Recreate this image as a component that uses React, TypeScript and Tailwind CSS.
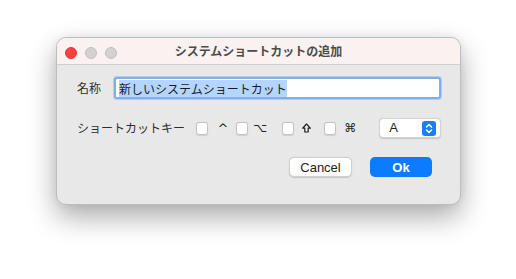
import React from "react";

const jp = "font-['Noto_Sans_CJK_JP','Noto_Sans',sans-serif]";

const Check = ({ className = "" }: { className?: string }) => (
  <span
    className={`block w-[12px] h-[13px] rounded-[3px] bg-white border border-[#c4c4c4] shadow-[0_0.5px_1px_rgba(0,0,0,0.12)] ${className}`}
  />
);

const App = () => {
  return (
    <div className="w-[516px] h-[279px] bg-white pt-[37px] pl-[56px] overflow-hidden">
      <div className="w-[405px] h-[168px] rounded-[10px] border border-[#bdbdbd] bg-[#e8e8e8] shadow-[0_12px_28px_rgba(0,0,0,0.33),0_0_10px_rgba(0,0,0,0.06)] overflow-hidden flex flex-col">
        {/* title bar */}
        <div className="relative h-[27px] bg-[#f9f2f0] border-b border-[#cfcfcf] flex items-center shrink-0">
          <div className="flex items-center gap-[8px] pl-[8px] pt-[3px]">
            <span className="block w-[12px] h-[12px] rounded-full bg-[#f5413f] border border-[#dd3a37]" />
            <span className="block w-[12px] h-[12px] rounded-full bg-[#d6d1d0] border border-[#c3bebd]" />
            <span className="block w-[12px] h-[12px] rounded-full bg-[#d6d1d0] border border-[#c3bebd]" />
          </div>
          <div
            className={`absolute inset-0 flex items-center justify-center text-[12px] font-bold text-[#4b4b4b] ${jp}`}
          >
            システムショートカットの追加
          </div>
        </div>

        {/* body */}
        <div className="flex flex-col pl-[20px] pr-[19px]">
          <div className="flex items-center mt-[12px] h-[22px]">
            <span className={`text-[12px] text-[#2e2e2e] w-[37px] ${jp}`}>名称</span>
            <div className="flex-1 h-[22px] bg-white rounded-[3px] border-[2px] border-[#7eb0f0] shadow-[0_0_0_1px_rgba(90,150,230,0.35)] flex items-center px-[3px]">
              <span className={`bg-[#b4d5fe] text-[12px] leading-[17px] text-[#1c1c1c] ${jp}`}>
                新しいシステムショートカット
              </span>
            </div>
          </div>

          <div className="flex items-center mt-[19px] h-[20px]">
            <span className={`text-[12px] text-[#2e2e2e] w-[120px] ${jp}`}>ショートカットキー</span>
            <Check />
            <span className="ml-[9px] w-[10px] text-[13px] text-[#222] font-['DejaVu_Sans',sans-serif] leading-none">
              ^
            </span>
            <Check className="ml-[9px]" />
            <span className="ml-[5px] w-[11px] text-[12px] text-[#222] font-['DejaVu_Sans',sans-serif] leading-none">
              ⌥
            </span>
            <Check className="ml-[18px]" />
            <span className="ml-[8px] w-[9px] flex items-center">
              <svg width="9" height="10" viewBox="0 0 9 10" fill="none" stroke="#222" strokeWidth="1.2" strokeLinejoin="round">
                <path d="M4.5 1 L8.3 5.2 L6.2 5.2 L6.2 9 L2.8 9 L2.8 5.2 L0.7 5.2 Z" />
              </svg>
            </span>
            <Check className="ml-[13px]" />
            <span className="ml-[8px] w-[10px] text-[12px] text-[#222] font-['DejaVu_Sans',sans-serif] leading-none">
              ⌘
            </span>
            <div className="ml-[25px] w-[62px] h-[20px] bg-white rounded-[4px] border border-[#d3d3d3] shadow-[0_0.5px_1px_rgba(0,0,0,0.15)] flex items-center pl-[9px] pr-[4px]">
              <span className="flex-1 text-[13px] text-[#222] font-['Liberation_Sans',sans-serif]">A</span>
              <span className="w-[14px] h-[15px] rounded-[3px] bg-[#1a7ef7] flex items-center justify-center">
                <svg width="8" height="11" viewBox="0 0 8 11" fill="none" stroke="white" strokeWidth="1.5" strokeLinecap="round" strokeLinejoin="round">
                  <path d="M1.5 4 L4 1.5 L6.5 4" />
                  <path d="M1.5 7 L4 9.5 L6.5 7" />
                </svg>
              </span>
            </div>
          </div>

          <div className="flex justify-end mt-[19px] pr-[9px] gap-[18px]">
            <button className="w-[63px] h-[20px] bg-white rounded-[5px] border border-[#cfcfcf] shadow-[0_0.5px_1px_rgba(0,0,0,0.15)] text-[13px] text-[#222] font-['Liberation_Sans',sans-serif] leading-none">
              Cancel
            </button>
            <button className="w-[62px] h-[20px] bg-[#0b7cff] rounded-[5px] text-[13px] text-white font-['Liberation_Sans',sans-serif] font-bold leading-none">
              Ok
            </button>
          </div>
        </div>
      </div>
    </div>
  );
};

export default App;
